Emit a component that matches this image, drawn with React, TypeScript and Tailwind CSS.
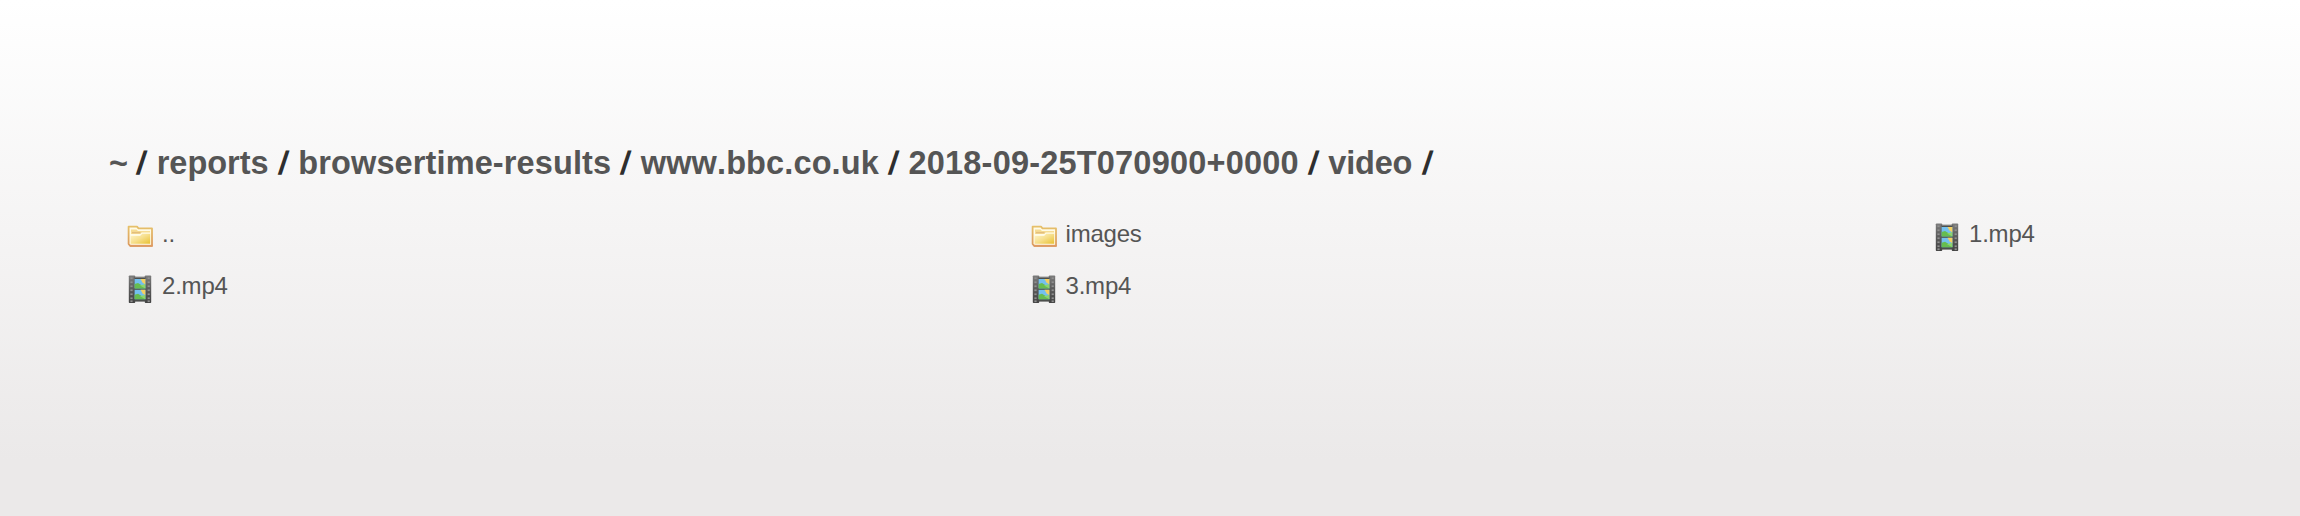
import { Fragment } from 'react';

const crumbs = [
  { label: '~', tracking: 'tracking-[-0.9px]' },
  { label: 'reports', tracking: 'tracking-normal' },
  { label: 'browsertime-results', tracking: 'tracking-[0.12px]' },
  { label: 'www.bbc.co.uk', tracking: 'tracking-[0.12px]' },
  { label: '2018-09-25T070900+0000', tracking: 'tracking-[0.2px]' },
  { label: 'video', tracking: 'tracking-[-0.2px]' },
];

const files = [
  { name: '..', kind: 'folder' },
  { name: 'images', kind: 'folder' },
  { name: '1.mp4', kind: 'video' },
  { name: '2.mp4', kind: 'video' },
  { name: '3.mp4', kind: 'video' },
];

function FolderIcon() {
  return (
    <svg className="mt-[9px] h-[26px] w-[28px] shrink-0" viewBox="0 0 28 26">
      <defs>
        <linearGradient id="folder" x1="0" y1="0" x2="1" y2="1">
          <stop offset="0" stopColor="#fff6cf" />
          <stop offset="0.5" stopColor="#f6df8c" />
          <stop offset="1" stopColor="#e8c030" />
        </linearGradient>
        <linearGradient id="rim" x1="0" y1="0" x2="0" y2="1">
          <stop offset="0" stopColor="#e6c06a" />
          <stop offset="1" stopColor="#dc9a5e" />
        </linearGradient>
      </defs>
      <path d="M2.6 1.6H11L12.5 3.4H26V20.8H4.2L2.6 19Z" fill="#fffbe6" stroke="url(#rim)" strokeWidth="1.8" strokeLinejoin="round" />
      <path d="M4 20.8H26.6" stroke="#de9a62" strokeWidth="2" />
      <path d="M5 4.5H10.5L12 6H24V9H5Z" fill="#f6dc93" />
      <path d="M4.6 10.4H14L16 8.4H24.2V18.8H4.6Z" fill="url(#folder)" />
      <path d="M4.6 10.2H14L16 8.2H24.2" fill="none" stroke="#fffbe6" strokeWidth="1.2" />
      <path d="M6 7.6H14.5" stroke="#e3bd7c" strokeWidth="1.4" />
    </svg>
  );
}

function VideoIcon() {
  return (
    <svg className="mt-[6px] h-[30px] w-[28px] shrink-0" viewBox="0 0 28 30">
      <defs>
        <linearGradient id="reel" x1="0" y1="0" x2="0" y2="1">
          <stop offset="0" stopColor="#7c7c7c" />
          <stop offset="0.5" stopColor="#5a5a5a" />
          <stop offset="1" stopColor="#424242" />
        </linearGradient>
      </defs>
      <rect x="2.8" y="1.5" width="6.4" height="27.5" rx="0.8" fill="url(#reel)" />
      <rect x="18.8" y="1.5" width="6.4" height="27.5" rx="0.8" fill="url(#reel)" />
      <rect x="8.6" y="2.8" width="10.8" height="24.8" fill="#4c4f4c" />
      <path d="M9 3.4H19" stroke="#858585" strokeWidth="1" />
      {[5, 15.8].map((y) => (
        <g key={y}>
          <rect x="8.6" y={y} width="10.8" height="9.4" fill="#74c0ee" />
          <path d={`M14.5 ${y}H19.4V${y + 5.5}L16.5 ${y + 3.5}Z`} fill="#f3cf62" />
          <path d={`M8.6 ${y + 5}L12 ${y + 4}L19.4 ${y + 8.5}V${y + 9.4}H8.6Z`} fill="#66bd50" />
          <path d={`M14 ${y + 6.5}L19.4 ${y + 5}V${y + 9.4}Z`} fill="#8ed46e" />
        </g>
      ))}
      {[3.4, 7.4, 11.4, 15.4, 19.4, 23.4, 26.4].map((y) => (
        <g key={y} fill="#909090">
          <rect x="4.4" y={y} width="2.2" height="1.7" />
          <rect x="21.6" y={y} width="2.2" height="1.7" />
        </g>
      ))}
    </svg>
  );
}

export default function App() {
  return (
    <div className="h-[516px] w-full overflow-hidden bg-[#ebe9e9] bg-[linear-gradient(to_bottom,#ffffff_0px,#ebe9e9_460px)] px-[109px] pt-[144px] font-['Liberation_Sans',Arial,sans-serif] text-[#555555]">
      <h1 className="h-[38px] text-[32.5px] leading-[38px] font-bold whitespace-nowrap text-[#2e2e2e] [font-kerning:none] [word-spacing:1.25px]">
        {crumbs.map((c) => (
          <Fragment key={c.label}>
            <a className={`text-[#555555] ${c.tracking}`}>{c.label}</a>{' '}
            <span className="inline-block -skew-x-8">/</span>{' '}
          </Fragment>
        ))}
      </h1>
      <ul className="mt-[34px] grid grid-cols-[903.5px_903.5px_1fr] text-[24px] tracking-[-0.2px]">
        {files.map((f) => (
          <li key={f.name} className="flex h-[52px] items-start pl-[17px]">
            {f.kind === 'folder' ? <FolderIcon /> : <VideoIcon />}
            <span className="ml-[8px] leading-[36px]">{f.name}</span>
          </li>
        ))}
      </ul>
    </div>
  );
}
